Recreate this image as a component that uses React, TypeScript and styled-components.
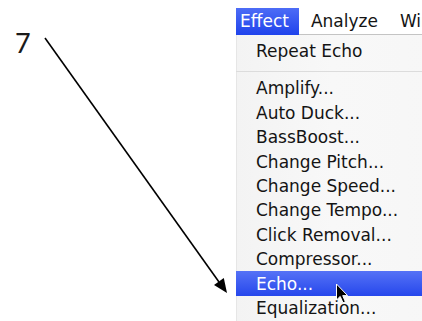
import React from "react";
import styled, { createGlobalStyle } from "styled-components";

const Global = createGlobalStyle`
  html, body { margin: 0; padding: 0; background: #ffffff; }
  #root { width: 422px; height: 321px; }
`;

const Page = styled.div`
  position: relative;
  width: 422px;
  height: 321px;
  overflow: hidden;
  display: flex;
  flex-direction: row;
  background: #ffffff;
`;

const Annotation = styled.div`
  width: 236px;
  flex: 0 0 236px;
  padding: 30px 0 0 15px;
  box-sizing: border-box;
`;

const StepNumber = styled.div`
  font-family: "Lato", "Liberation Sans", Arial, sans-serif;
  font-weight: 400;
  font-size: 27px;
  line-height: 26px;
  color: #1a1a1a;
`;

const MenuColumn = styled.div`
  flex: 1;
  padding-top: 8px;
  display: flex;
  flex-direction: column;
  font-family: "DejaVu Sans", "Lucida Grande", sans-serif;
  font-size: 17px;
  color: #141414;
  white-space: nowrap;
`;

const MenuBar = styled.div`
  height: 27px;
  display: flex;
  align-items: stretch;
  background: #ffffff;
  box-shadow: inset 0 -1px 0 #c4c4c4;
`;

const BarItem = styled.div<{ $active?: boolean }>`
  line-height: 27px;
  padding: ${(p) => (p.$active ? "0 10px 0 4px" : "0 0 0 12px")};
  margin-right: ${(p) => (p.$active ? "0" : "10px")};
  background: ${(p) =>
    p.$active ? "linear-gradient(#4d6cf6, #1f43ec)" : "transparent"};
  color: ${(p) => (p.$active ? "#ffffff" : "#141414")};
`;

const Dropdown = styled.div`
  flex: 1;
  padding-top: 3px;
  background: linear-gradient(90deg, #f3f3f3, #f8f8f8 40%, #f6f6f6);
  box-shadow: inset 1px 0 0 #e6e6e6;
  display: flex;
  flex-direction: column;
`;

const Item = styled.div<{ $selected?: boolean }>`
  height: 24.4px;
  box-sizing: border-box;
  padding: 1.5px 0 0 20px;
  line-height: 22.9px;
  background: ${(p) =>
    p.$selected ? "linear-gradient(#5572f6, #2647ec)" : "transparent"};
  color: ${(p) => (p.$selected ? "#ffffff" : "#141414")};
`;

const Separator = styled.div`
  height: 1px;
  margin: 8.6px 0 4px 0;
  background: #dcdcdc;
`;

const Overlay = styled.svg`
  position: absolute;
  left: 0;
  top: 0;
  width: 422px;
  height: 321px;
  pointer-events: none;
`;

const Cursor = styled.svg`
  position: absolute;
  left: 335px;
  top: 283px;
  width: 14px;
  height: 22px;
  pointer-events: none;
`;

const items = [
  "Amplify...",
  "Auto Duck...",
  "BassBoost...",
  "Change Pitch...",
  "Change Speed...",
  "Change Tempo...",
  "Click Removal...",
  "Compressor...",
  "Echo...",
  "Equalization...",
];

export default function App() {
  return (
    <>
      <Global />
      <Page>
        <Annotation>
          <StepNumber>7</StepNumber>
        </Annotation>
        <MenuColumn>
          <MenuBar>
            <BarItem $active>Effect</BarItem>
            <BarItem>Analyze</BarItem>
            <BarItem>Window</BarItem>
          </MenuBar>
          <Dropdown>
            <Item>Repeat Echo</Item>
            <Separator />
            {items.map((label) => (
              <Item key={label} $selected={label === "Echo..."}>
                {label}
              </Item>
            ))}
          </Dropdown>
        </MenuColumn>
        <Overlay viewBox="0 0 422 321">
          <line
            x1="45"
            y1="38"
            x2="219"
            y2="282"
            stroke="#000000"
            strokeWidth="1.6"
          />
          <polygon points="227,293 223.8,278.1 214,285.1" fill="#000000" />
        </Overlay>
        <Cursor viewBox="0 0 14 22">
          <path
            d="M1.5 1 L1.5 17 L5.2 13.4 L8 19.8 L10.4 18.8 L7.7 12.6 L12.6 12.6 Z"
            fill="#000000"
            stroke="#ffffff"
            strokeWidth="1"
            strokeLinejoin="round"
          />
        </Cursor>
      </Page>
    </>
  );
}
